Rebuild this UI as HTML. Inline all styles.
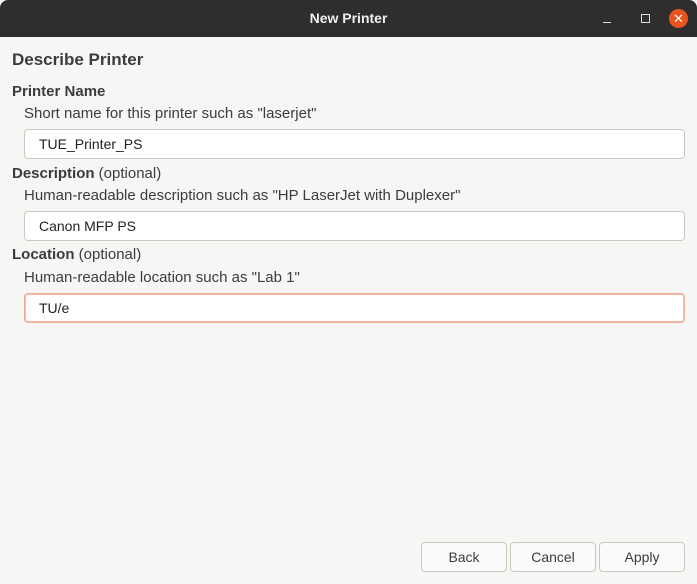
<html><head><style>
body{margin:0;width:697px;height:584px;background:#f6f6f5;font-family:"Liberation Sans",sans-serif;color:#3c3c3c;position:relative;overflow:hidden}
.t{position:absolute;white-space:nowrap}
.bar{position:absolute;left:0;top:0;width:697px;height:37px;background:#2f2e2d;border-radius:8px 8px 0 0}
.e{position:absolute;left:24px;width:659px;height:28px;background:#fff;border:1px solid #cdc7c2;border-radius:4px;font-size:14px;line-height:28px;text-indent:14px;color:#222}
.b{position:absolute;top:542px;width:84px;height:28px;border:1px solid #cdc7c2;border-radius:4px;background:#fafafa;font-size:14px;line-height:28px;text-align:center;color:#3c3c3c}
</style></head><body>
<div class="bar"></div>
<div class="t" style="left:0;width:697px;text-align:center;top:10px;color:#eee;font-weight:bold;font-size:14px">New Printer</div>
<div class="t" style="left:603px;top:22px;width:8px;height:1px;background:#ddd"></div>
<div class="t" style="left:641px;top:14px;width:7px;height:7px;border:1px solid #ddd"></div>
<div class="t" style="left:669px;top:9px;width:19px;height:19px;border-radius:50%;background:#e95420;color:#fff;font-size:13px;text-align:center;line-height:19px">✕</div>
<div class="t" style="left:12px;top:50px;font-size:17px;font-weight:bold">Describe Printer</div>
<div class="t" style="left:12px;top:83px;font-size:15px;font-weight:bold">Printer Name</div>
<div class="t" style="left:24px;top:105px;font-size:15px">Short name for this printer such as "laserjet"</div>
<div class="e" style="top:129px">TUE_Printer_PS</div>
<div class="t" style="left:12px;top:165px;font-size:15px"><b>Description</b> (optional)</div>
<div class="t" style="left:24px;top:187px;font-size:15px">Human-readable description such as "HP LaserJet with Duplexer"</div>
<div class="e" style="top:211px">Canon MFP PS</div>
<div class="t" style="left:12px;top:246px;font-size:15px"><b>Location</b> (optional)</div>
<div class="t" style="left:24px;top:269px;font-size:15px">Human-readable location such as "Lab 1"</div>
<div class="e" style="top:293px;border-color:#efab94;box-shadow:0 0 0 1px #f3c0ae inset">TU/e</div>
<div class="b" style="left:421px">Back</div>
<div class="b" style="left:510px">Cancel</div>
<div class="b" style="left:599px">Apply</div>
</body></html>
